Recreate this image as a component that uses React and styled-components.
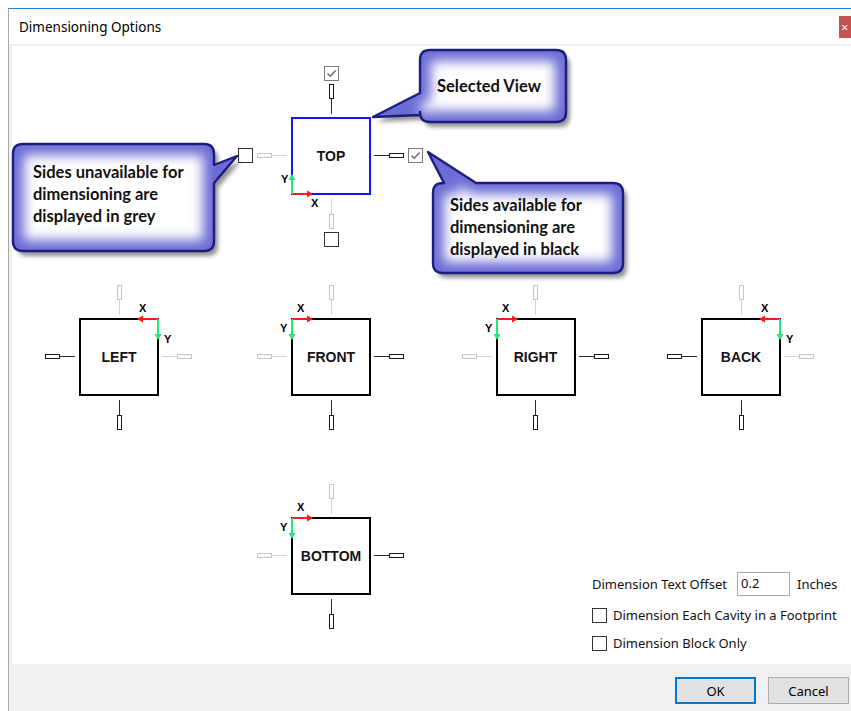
import React from "react";
import styled, { createGlobalStyle } from "styled-components";

const GlobalStyle = createGlobalStyle`
  html, body {
    margin: 0;
    padding: 0;
    background: #fff;
    overflow: hidden;
  }
  body {
    font-family: "Noto Sans", "Liberation Sans", sans-serif;
    color: #000;
  }
`;

const Window = styled.div`
  margin: 8px 0 0 8px;
  width: 843px;
  height: 702px;
  border-top: 1px solid #1883d7;
  border-left: 1px solid #a9a9a9;
  background: #f0f0f0;
  display: flex;
  flex-direction: column;
`;

const TitleBar = styled.div`
  height: 35px;
  background: #fff;
  display: flex;
  align-items: center;
  justify-content: space-between;
  padding-left: 10px;
  font-size: 13.5px;
  color: #000;
`;

const CloseBtn = styled.div`
  width: 13px;
  height: 22px;
  margin-top: 1px;
  background: #c75050;
  color: #fff;
  font-size: 13px;
  line-height: 22px;
  padding-left: 2px;
  box-sizing: border-box;
  overflow: hidden;
`;

const Body = styled.div`
  flex: 1;
  display: flex;
  flex-direction: column;
  padding: 2px 0 0 3px;
`;

const Canvas = styled.div`
  position: relative;
  height: 618px;
  background: #fff;
  display: grid;
  grid-template-columns: 213px 211px 198px 213px;
  grid-template-rows: 220px 182px 1fr;
`;

const Footer = styled.div`
  height: 47px;
  display: flex;
  justify-content: flex-end;
  align-items: flex-start;
  gap: 12px;
  padding: 13px 3px 0 0;
  box-sizing: border-box;
`;

const Button = styled.button`
  width: 81px;
  height: 27px;
  box-sizing: border-box;
  background: #e1e1e1;
  border: ${(p) => (p.$primary ? "2px solid #0078d7" : "1px solid #adadad")};
  font-family: "Noto Sans", "Liberation Sans", sans-serif;
  font-size: 13px;
  color: #000;
  padding: 0;
`;

/* ---------- view nodes ---------- */

const Node = styled.div`
  grid-column: ${(p) => p.$col};
  grid-row: ${(p) => p.$row};
  justify-self: center;
  align-self: center;
  display: grid;
  grid-template-columns: auto 80px auto;
  grid-template-rows: auto 78px auto;
`;

const Square = styled.div`
  grid-column: 2;
  grid-row: 2;
  position: relative;
  box-sizing: border-box;
  width: 80px;
  height: 78px;
  border: 2px solid ${(p) => (p.$selected ? "#1414ff" : "#000")};
  display: flex;
  align-items: center;
  justify-content: center;
  font-family: "Liberation Sans", Arial, sans-serif;
  font-weight: bold;
  font-size: 14px;
  color: #141414;
`;

const armPlace = {
  top: "grid-column: 2; grid-row: 1; justify-self: center; align-self: end; flex-direction: column; padding-bottom: 3px;",
  bottom: "grid-column: 2; grid-row: 3; justify-self: center; align-self: start; flex-direction: column; padding-top: 4px;",
  left: "grid-column: 1; grid-row: 2; justify-self: end; align-self: center; flex-direction: row; padding-right: 4px;",
  right: "grid-column: 3; grid-row: 2; justify-self: start; align-self: center; flex-direction: row; padding-left: 3px;",
};

const Arm = styled.div`
  display: flex;
  align-items: center;
  ${(p) => armPlace[p.$side]}
`;

const Stem = styled.div`
  background: ${(p) => (p.$grey ? "#d2d2d2" : "#2a2a2a")};
  width: ${(p) => (p.$vertical ? "1px" : "15px")};
  height: ${(p) => (p.$vertical ? "15px" : "1px")};
`;

const Pad = styled.div`
  box-sizing: border-box;
  background: #fff;
  border: 1px solid ${(p) => (p.$grey ? "#c6c6c6" : "#1a1a1a")};
  width: ${(p) => (p.$vertical ? "5px" : "15px")};
  height: ${(p) => (p.$vertical ? "15px" : "5px")};
`;

const Tick = styled.div`
  box-sizing: border-box;
  width: 15px;
  height: 15px;
  background: #fff;
  border: 1px solid ${(p) => (p.$checked ? "#7a7a7a" : "#333")};
  margin: ${(p) => p.$margin};
  display: flex;
  align-items: center;
  justify-content: center;
`;

const CheckMark = ({ color = "#6a6a6a" }) => (
  <svg width="13" height="13" viewBox="0 0 13 13">
    <polyline points="2.5,6.5 5.2,9.3 10.6,3.6" fill="none" stroke={color} strokeWidth="1.4" />
  </svg>
);

const tickMargin = {
  top: "0 0 3px 0",
  bottom: "3px 0 0 0",
  left: "0 4px 0 0",
  right: "0 0 0 4px",
};

function ArmPiece({ side, grey, box }) {
  const vertical = side === "top" || side === "bottom";
  const tick = box ? (
    <Tick $checked={box === "checked"} $margin={tickMargin[side]}>
      {box === "checked" && <CheckMark />}
    </Tick>
  ) : null;
  const stem = <Stem $grey={grey} $vertical={vertical} />;
  const pad = <Pad $grey={grey} $vertical={vertical} />;
  const outward = side === "top" || side === "left";
  return (
    <Arm $side={side}>
      {outward ? (
        <>
          {tick}
          {pad}
          {stem}
        </>
      ) : (
        <>
          {stem}
          {pad}
          {tick}
        </>
      )}
    </Arm>
  );
}

const AxisSvg = styled.svg`
  position: absolute;
  left: -2px;
  top: -2px;
  overflow: visible;
  pointer-events: none;
`;

const RED = "#ff1a1a";
const GREEN = "#22e87a";

function Axis({ corner }) {
  const label = { fontFamily: "Liberation Sans, Arial, sans-serif", fontWeight: "bold", fontSize: 11, fill: "#000" };
  if (corner === "bl") {
    return (
      <AxisSvg width="80" height="78">
        <line x1="1" y1="77" x2="18" y2="77" stroke={RED} strokeWidth="2" />
        <polygon points="22,77 16,73.5 16,80.5" fill={RED} />
        <line x1="1" y1="77" x2="1" y2="61" stroke={GREEN} strokeWidth="2" />
        <polygon points="1,57 -2.5,63 4.5,63" fill={GREEN} />
        <text x="-10" y="66" style={label}>Y</text>
        <text x="20" y="90" style={label}>X</text>
      </AxisSvg>
    );
  }
  if (corner === "tr") {
    return (
      <AxisSvg width="80" height="78">
        <line x1="79" y1="1" x2="62" y2="1" stroke={RED} strokeWidth="2" />
        <polygon points="58,1 64,-2.5 64,4.5" fill={RED} />
        <line x1="79" y1="1" x2="79" y2="18" stroke={GREEN} strokeWidth="2" />
        <polygon points="79,22 75.5,16 82.5,16" fill={GREEN} />
        <text x="60" y="-6" style={label}>X</text>
        <text x="85" y="25" style={label}>Y</text>
      </AxisSvg>
    );
  }
  return (
    <AxisSvg width="80" height="78">
      <line x1="1" y1="1" x2="18" y2="1" stroke={RED} strokeWidth="2" />
      <polygon points="22,1 16,-2.5 16,4.5" fill={RED} />
      <line x1="1" y1="1" x2="1" y2="18" stroke={GREEN} strokeWidth="2" />
      <polygon points="1,22 -2.5,16 4.5,16" fill={GREEN} />
      <text x="6" y="-6" style={label}>X</text>
      <text x="-11" y="14" style={label}>Y</text>
    </AxisSvg>
  );
}

function View({ view }) {
  const { name, col, row, selected, axis, arms } = view;
  return (
    <Node $col={col} $row={row}>
      {["top", "left", "right", "bottom"].map((side) => (
        <ArmPiece key={side} side={side} grey={arms[side].grey} box={arms[side].box} />
      ))}
      <Square $selected={selected}>
        {name}
        <Axis corner={axis} />
      </Square>
    </Node>
  );
}

const G = { grey: true };
const B = { grey: false };

const views = [
  {
    name: "TOP",
    col: 2,
    row: 1,
    selected: true,
    axis: "bl",
    arms: {
      top: { grey: false, box: "checked" },
      left: { grey: true, box: "empty" },
      right: { grey: false, box: "checked" },
      bottom: { grey: true, box: "empty" },
    },
  },
  { name: "LEFT", col: 1, row: 2, axis: "tr", arms: { top: G, left: B, right: G, bottom: B } },
  { name: "FRONT", col: 2, row: 2, axis: "tl", arms: { top: G, left: G, right: B, bottom: B } },
  { name: "RIGHT", col: 3, row: 2, axis: "tl", arms: { top: G, left: G, right: B, bottom: B } },
  { name: "BACK", col: 4, row: 2, axis: "tr", arms: { top: G, left: B, right: G, bottom: B } },
  { name: "BOTTOM", col: 2, row: 3, axis: "tl", arms: { top: G, left: G, right: B, bottom: B } },
];

/* ---------- callouts ---------- */

const CalloutBox = styled.div`
  position: absolute;
  left: ${(p) => p.$x}px;
  top: ${(p) => p.$y}px;
  width: ${(p) => p.$w}px;
  height: ${(p) => p.$h}px;
  z-index: 2;
`;

const BubbleSvg = styled.svg`
  position: absolute;
  left: 0;
  top: 0;
  overflow: visible;
`;

const CalloutText = styled.div`
  position: relative;
  padding: ${(p) => p.$pad};
  font-family: Lato, "Open Sans", sans-serif;
  font-weight: bold;
  font-size: 16.5px;
  line-height: 22px;
  color: #111;
`;

function bubblePath(w, h, r, t) {
  let d = `M ${r} 0 `;
  if (t.side === "top") d += `L ${t.a} 0 L ${t.tx} ${t.ty} L ${t.b} 0 `;
  d += `L ${w - r} 0 Q ${w} 0 ${w} ${r} `;
  if (t.side === "right") d += `L ${w} ${t.a} L ${t.tx} ${t.ty} L ${w} ${t.b} `;
  d += `L ${w} ${h - r} Q ${w} ${h} ${w - r} ${h} L ${r} ${h} Q 0 ${h} 0 ${h - r} `;
  if (t.side === "left") d += `L 0 ${t.b} L ${t.tx} ${t.ty} L 0 ${t.a} `;
  d += `L 0 ${r} Q 0 0 ${r} 0 Z`;
  return d;
}

function Callout({ id, x, y, w, h, tail, pad, children }) {
  const d = bubblePath(w, h, 10, tail);
  const region = { x: -80, y: -80, width: w + 160, height: h + 160, filterUnits: "userSpaceOnUse" };
  return (
    <CalloutBox $x={x} $y={y} $w={w} $h={h}>
      <BubbleSvg width={w} height={h}>
        <defs>
          <clipPath id={`${id}-clip`}>
            <path d={d} />
          </clipPath>
          <filter id={`${id}-glow`} {...region}>
            <feGaussianBlur stdDeviation="6" />
          </filter>
          <filter id={`${id}-shadow`} {...region}>
            <feGaussianBlur stdDeviation="2.2" />
          </filter>
        </defs>
        <path d={d} fill="#000" opacity="0.42" transform="translate(4 5)" filter={`url(#${id}-shadow)`} />
        <path d={d} fill="#fff" />
        <g clipPath={`url(#${id}-clip)`}>
          <path d={d} fill="none" stroke="#6c6cd6" strokeWidth="22" filter={`url(#${id}-glow)`} />
        </g>
        <path d={d} fill="none" stroke="#1d1d7e" strokeWidth="2.4" strokeLinejoin="round" />
      </BubbleSvg>
      <CalloutText $pad={pad}>{children}</CalloutText>
    </CalloutBox>
  );
}

/* ---------- options ---------- */

const Options = styled.div`
  grid-column: 3 / 5;
  grid-row: 3;
  align-self: end;
  justify-self: start;
  margin: 0 0 13px 156px;
  display: flex;
  flex-direction: column;
  font-size: 13px;
  line-height: 15px;
  color: #111;
`;

const OptRow = styled.div`
  display: flex;
  align-items: center;
  height: ${(p) => p.$h}px;
  margin-top: ${(p) => p.$top || 0}px;
`;

const OffsetLabel = styled.span`
  width: 145px;
`;

const OffsetInput = styled.div`
  box-sizing: border-box;
  width: 53px;
  height: 24px;
  border: 1px solid #a9a9a9;
  padding: 3px 0 0 3px;
  background: #fff;
`;

const Unit = styled.span`
  margin-left: 7px;
`;

const OptBox = styled.div`
  box-sizing: border-box;
  width: 15px;
  height: 15px;
  border: 1px solid #333;
  background: #fff;
  margin-right: 6px;
`;

export default function App() {
  return (
    <>
      <GlobalStyle />
      <Window>
        <TitleBar>
          <span>Dimensioning Options</span>
          <CloseBtn>×</CloseBtn>
        </TitleBar>
        <Body>
          <Canvas>
            {views.map((v) => (
              <View key={v.name} view={v} />
            ))}

            <Options>
              <OptRow $h={24}>
                <OffsetLabel>Dimension Text Offset</OffsetLabel>
                <OffsetInput>0.2</OffsetInput>
                <Unit>Inches</Unit>
              </OptRow>
              <OptRow $h={15} $top={12}>
                <OptBox />
                <span>Dimension Each Cavity in a Footprint</span>
              </OptRow>
              <OptRow $h={15} $top={13}>
                <OptBox />
                <span>Dimension Block Only</span>
              </OptRow>
            </Options>

            <Callout
              id="grey"
              x={1}
              y={98}
              w={201}
              h={107}
              pad="17px 0 0 20px"
              tail={{ side: "right", a: 21, b: 39, tx: 224, ty: 12 }}
            >
              Sides unavailable for
              <br />
              dimensioning are
              <br />
              displayed in grey
            </Callout>
            <Callout
              id="sel"
              x={408}
              y={4}
              w={146}
              h={72}
              pad="25px 0 0 17px"
              tail={{ side: "left", a: 43, b: 65, tx: -47, ty: 67 }}
            >
              Selected View
            </Callout>
            <Callout
              id="black"
              x={421}
              y={137}
              w={190}
              h={90}
              pad="11px 0 0 17px"
              tail={{ side: "top", a: 11, b: 43, tx: -5, ty: -31 }}
            >
              Sides available for
              <br />
              dimensioning are
              <br />
              displayed in black
            </Callout>
          </Canvas>
          <Footer>
            <Button $primary>OK</Button>
            <Button>Cancel</Button>
          </Footer>
        </Body>
      </Window>
    </>
  );
}
